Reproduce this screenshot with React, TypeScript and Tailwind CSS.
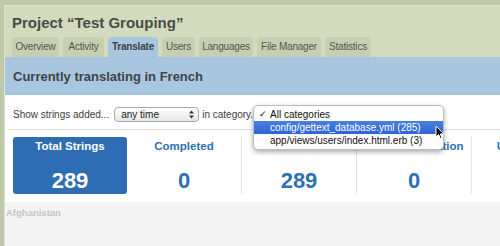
import React from "react";

const tabs = [
  { label: "Overview", w: "w-[47px]" },
  { label: "Activity", w: "w-[41px]" },
  { label: "Translate", w: "w-[50px]", active: true },
  { label: "Users", w: "w-[33px]" },
  { label: "Languages", w: "w-[54px]" },
  { label: "File Manager", w: "w-[64px]" },
  { label: "Statistics", w: "w-[46px]" },
];

const cols = [
  { label: "Completed", value: "0" },
  { label: "Untranslated", value: "289" },
  { label: "Needs Translation", value: "0" },
  { label: "Unreviewed", value: "0" },
];

export default function App() {
  return (
    <div className="relative w-[500px] h-[246px] overflow-hidden bg-[#bfc9aa] pt-[5px] pl-[4px] font-['Liberation_Sans',Arial,sans-serif]">
      <div className="h-full bg-[#d2dbbd] border-t border-l border-[#dce4c9] flex flex-col">
        <div className="pl-[7px] pt-[8px] text-[15px] leading-[18px] font-bold text-[#4a4d47]">
          Project “Test Grouping”
        </div>
        <div className="flex gap-[4px] pl-[7px] mt-[5px]">
          {tabs.map((t) => (
            <div
              key={t.label}
              className={`${t.w} h-[20px] rounded-t-[4px] text-center text-[10px] leading-[20px] tracking-[-0.2px] ${
                t.active
                  ? "bg-[#a9c6e0] font-bold text-[#3b4046]"
                  : "bg-[#c6cfb1] text-[#52564f]"
              }`}
            >
              {t.label}
            </div>
          ))}
        </div>
        <div className="h-[38px] bg-[#a9c6e0] pl-[8px] pt-[12px] text-[13px] leading-[16px] font-bold text-[#3f4347]">
          Currently translating in French
        </div>
        <div className="bg-white h-[107px] flex flex-col">
          <div className="flex items-center h-[15px] mt-[12px] pl-[8px] text-[10px] text-[#3c3c3c]">
            <span>Show strings added...</span>
            <div className="ml-[5px] w-[85px] h-[15px] rounded-[4px] border border-[#a9a9a9] bg-gradient-to-b from-white to-[#e6e6e6] flex items-center justify-between pl-[6px] pr-[4px] text-[#222]">
              <span>any time</span>
              <svg width="5" height="9" viewBox="0 0 5 9">
                <path d="M0 3.5 L2.5 0.5 L5 3.5 Z" fill="#333" />
                <path d="M0 5.5 L2.5 8.5 L5 5.5 Z" fill="#333" />
              </svg>
            </div>
            <span className="ml-[3px]">in category...</span>
          </div>
          <div className="ml-[4px] mt-[7px] h-px bg-[#dedede]" />
          <div className="flex mt-[7px] pl-[8px] h-[57px]">
            <div className="w-[114px] h-[57px] shrink-0 rounded-[3px] bg-[#2e6db4] text-white font-bold flex flex-col items-center">
              <div className="mt-[2px] text-[11.5px] leading-[14px]">Total Strings</div>
              <div className="mt-[15px] text-[22px] leading-[26px]">289</div>
            </div>
            {cols.map((c) => (
              <div
                key={c.label}
                className="w-[115px] h-[57px] shrink-0 border-r border-[#e4e4e4] text-[#2f70b5] font-bold flex flex-col items-center"
              >
                <div className="mt-[2px] text-[11.5px] leading-[14px] whitespace-nowrap">{c.label}</div>
                <div className="mt-[15px] text-[22px] leading-[26px]">{c.value}</div>
              </div>
            ))}
          </div>
        </div>
        <div className="flex-1 bg-[#f4f4f4] pl-[1px] pt-[5px] text-[9.5px] leading-[12px] font-bold text-[#c6c6c6]">
          Afghanistan
        </div>
      </div>

      <div className="absolute left-[253px] top-[105px] w-[191px] h-[45px] rounded-[5px] border border-[#b9bfc8] bg-white shadow-[0_2px_5px_rgba(0,0,0,0.35)] pt-[2px] text-[10px] text-[#111]">
        <div className="h-[13px] leading-[13px] flex">
          <span className="w-[16px] pl-[5px] font-['DejaVu_Sans',sans-serif] text-[9px]">✓</span>
          <span>All categories</span>
        </div>
        <div className="h-[13px] leading-[13px] pl-[16px] bg-gradient-to-b from-[#4a80e0] to-[#2f63d3] text-white">
          config/gettext_database.yml (285)
        </div>
        <div className="h-[13px] leading-[13px] pl-[16px]">app/views/users/index.html.erb (3)</div>
      </div>

      <svg className="absolute left-[435px] top-[125px]" width="10" height="15" viewBox="0 0 10 15">
        <path d="M1 1 L1 12 L3.6 9.6 L5.4 13.6 L7 12.9 L5.3 9 L8.8 9 Z" fill="#000" stroke="#fff" strokeWidth="1" strokeLinejoin="round" />
      </svg>
    </div>
  );
}
